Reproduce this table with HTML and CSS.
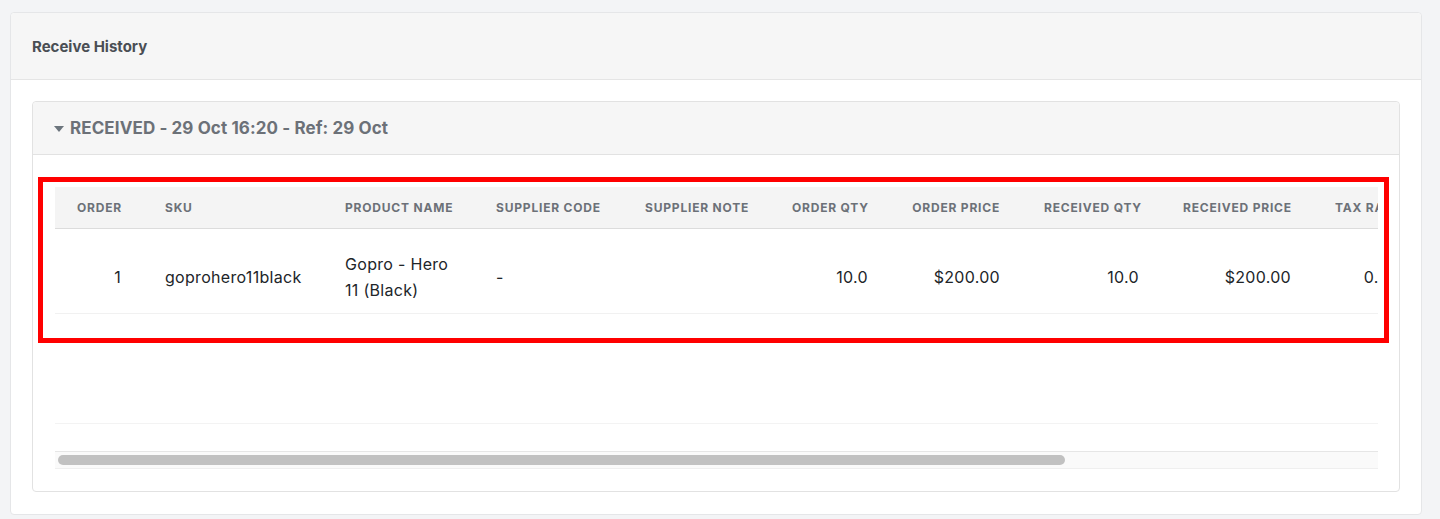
FILE: index.html
```html
<!DOCTYPE html>
<html lang="en">
<head>
<meta charset="utf-8">
<title>Receive History</title>
<link rel="stylesheet" href="styles.css">
</head>
<body>
<section class="card">
  <header class="card-header">Receive History</header>
  <div class="card-body">
    <div class="receipt">
      <div class="receipt-header">
        <svg class="caret" width="10" height="6" viewBox="0 0 10 6"><path d="M0 0h10L5 6z" fill="#6c757d"/></svg>
        <span>RECEIVED - 29 Oct 16:20 - Ref: 29 Oct</span>
      </div>
      <div class="receipt-body">
        <div class="table-wrap">
          <table class="lines">
            <colgroup>
              <col class="c-order"><col class="c-sku"><col class="c-name"><col class="c-scode"><col class="c-snote">
              <col class="c-oqty"><col class="c-oprice"><col class="c-rqty"><col class="c-rprice"><col class="c-tax">
              <col class="c-extra"><col class="c-extra">
            </colgroup>
            <thead>
              <tr>
                <th class="num">Order</th>
                <th>SKU</th>
                <th>Product Name</th>
                <th>Supplier Code</th>
                <th>Supplier Note</th>
                <th class="num">Order Qty</th>
                <th class="num">Order Price</th>
                <th class="num">Received Qty</th>
                <th class="num">Received Price</th>
                <th class="num">Tax Rate</th>
                <th class="num">Tax</th>
                <th class="num">Total</th>
              </tr>
            </thead>
            <tbody>
              <tr>
                <td class="num">1</td>
                <td>goprohero11black</td>
                <td>Gopro - Hero 11 (Black)</td>
                <td>-</td>
                <td></td>
                <td class="num">10.0</td>
                <td class="num">$200.00</td>
                <td class="num">10.0</td>
                <td class="num">$200.00</td>
                <td class="num">0.00</td>
                <td class="num">$0.00</td>
                <td class="num">$2,000.00</td>
              </tr>
            </tbody>
          </table>
          <div class="table-foot"></div>
          <div class="scrollbar"><div class="thumb"></div></div>
        </div>
        <div class="highlight"></div>
      </div>
    </div>
  </div>
</section>
</body>
</html>
```
FILE: styles.css
```css
* { box-sizing: border-box; }
html, body { margin: 0; }
body {
  background: #f3f4f6;
  font-family: Inter, "Liberation Sans", Arial, sans-serif;
  color: #212529;
  padding: 12px 18px 5px 10px;
}
.card {
  background: #fff;
  border: 1px solid #e5e6e8;
  border-radius: 4px;
}
.card-header {
  background: #f6f6f6;
  height: 67px;
  border-bottom: 1px solid #e5e5e5;
  border-radius: 4px 4px 0 0;
  padding: 0 21px;
  display: flex;
  align-items: center;
  font-size: 15px;
  font-weight: 700;
  color: #4a4e54;
}
.card-body {
  padding: 21px 21px 22px;
}
.receipt {
  border: 1px solid #e2e2e2;
  border-radius: 4px;
}
.receipt-header {
  background: #f6f6f6;
  height: 53px;
  border-bottom: 1px solid #e2e2e2;
  border-radius: 4px 4px 0 0;
  padding: 0 21px;
  display: flex;
  align-items: center;
  gap: 6px;
  font-size: 17px;
  font-weight: 700;
  letter-spacing: 0.1px;
  color: #6c7178;
}
.caret { flex: none; margin-top: 1px; }
.receipt-body {
  position: relative;
  padding: 32px 21px 22px 22px;
}
.table-wrap {
  overflow: hidden;
}
.lines {
  border-collapse: collapse;
  table-layout: fixed;
  width: 1728px;
}
.c-order { width: 88px; }
.c-sku { width: 180px; }
.c-name { width: 151px; }
.c-scode { width: 149px; }
.c-snote { width: 147px; }
.c-oqty { width: 120px; }
.c-oprice { width: 132px; }
.c-rqty { width: 139px; }
.c-rprice { width: 152px; }
.c-tax { width: 108px; }
.c-extra { width: 181px; }
.lines th {
  background: #f4f4f4;
  height: 41px;
  border-bottom: 1px solid #dcdcdc;
  padding: 0 22px;
  text-align: left;
  font-size: 12px;
  font-weight: 700;
  letter-spacing: 0.8px;
  text-transform: uppercase;
  color: #6c7178;
  white-space: nowrap;
  overflow: hidden;
}
.lines td {
  padding: 22px 22px 10px;
  font-size: 16px;
  line-height: 26px;
  letter-spacing: 0.3px;
  height: 85px;
  border-bottom: 1px solid #f1f1f1;
  vertical-align: middle;
  color: #212529;
}
.lines .num { text-align: right; }
.table-foot {
  height: 110px;
  border-bottom: 1px solid #f3f3f3;
}
.scrollbar {
  margin-top: 27px;
  height: 18px;
  background: #fafafa;
  border-top: 1px solid #e6e6e6;
  border-bottom: 1px solid #efefef;
  padding: 3px 3px;
}
.thumb {
  width: 1007px;
  height: 10px;
  border-radius: 5px;
  background: #c1c1c1;
}
.highlight {
  position: absolute;
  left: 5px;
  top: 22px;
  width: 1351px;
  height: 166px;
  border: 5px solid #ff0000;
  pointer-events: none;
}
```
